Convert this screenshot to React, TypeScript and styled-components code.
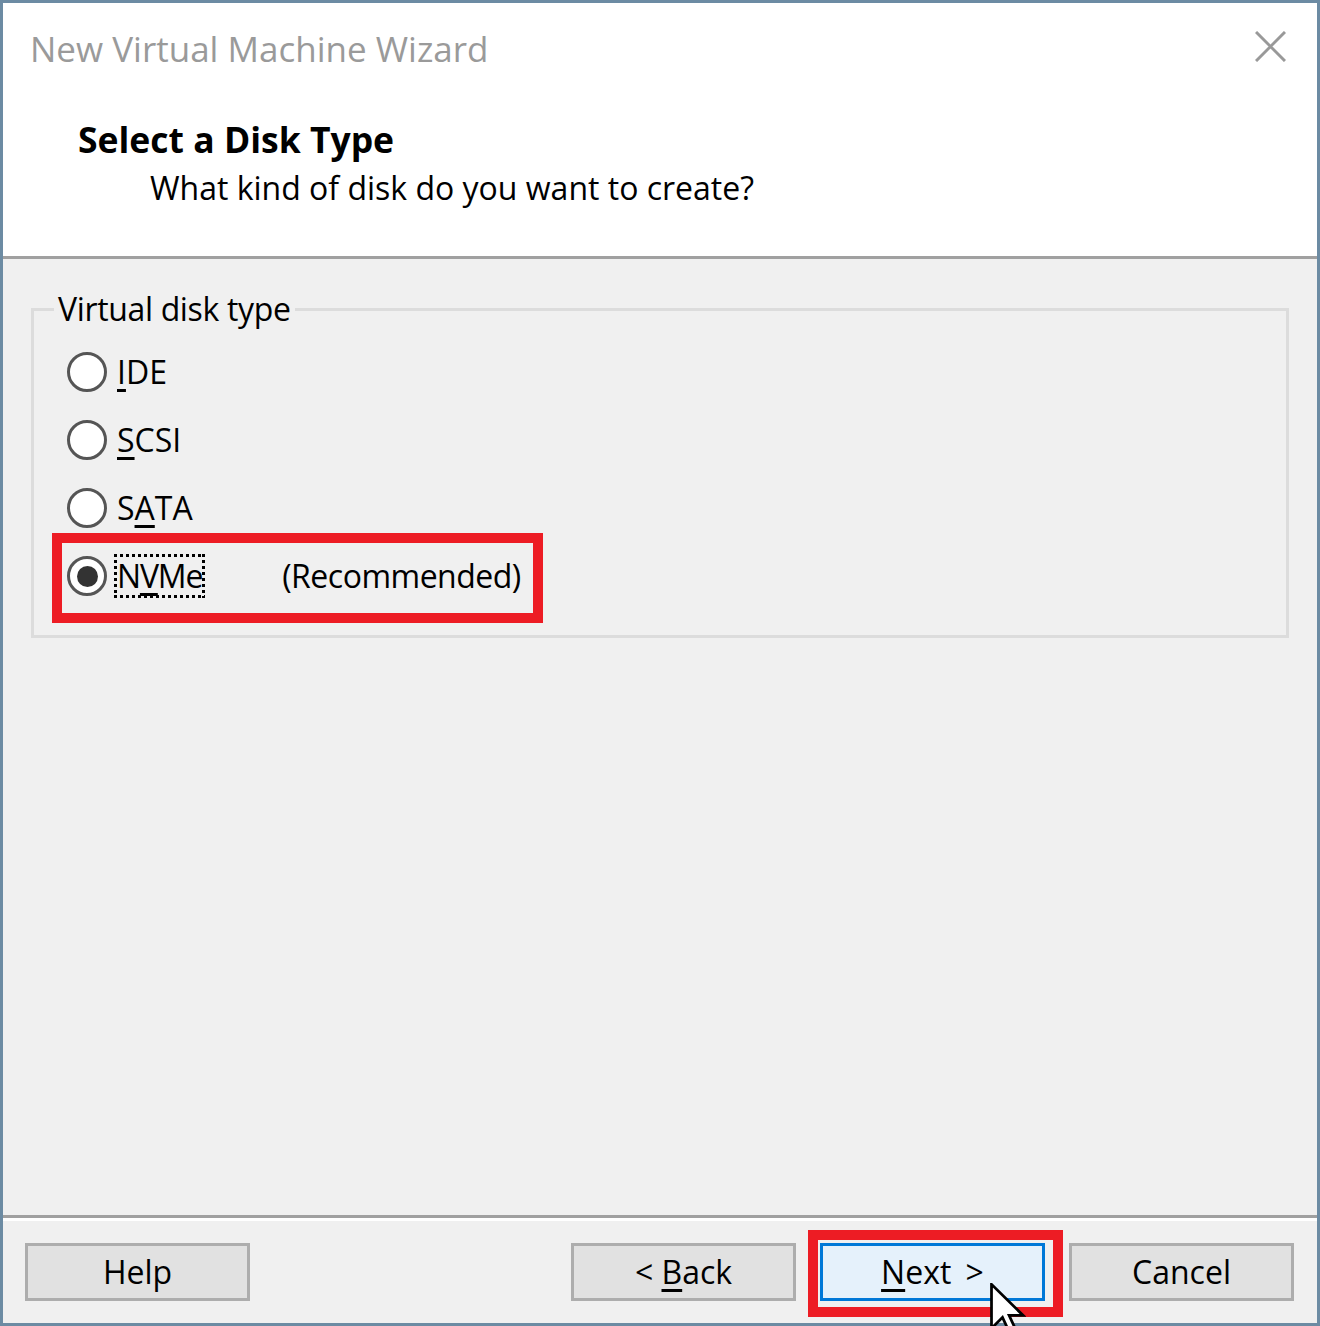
import React from "react";
import styled, { createGlobalStyle, css } from "styled-components";

const GlobalStyle = createGlobalStyle`
  html, body { margin: 0; padding: 0; overflow: hidden; background: #f0f0f0; }
  body { font-family: "Open Sans", "Noto Sans", "DejaVu Sans", sans-serif; color: #000; }
  * { box-sizing: border-box; }
`;

const Window = styled.div`
  position: relative;
  width: 1320px;
  height: 1326px;
  border: 3px solid #6c8ba3;
  background: #f0f0f0;
  display: flex;
  flex-direction: column;
`;

const Header = styled.header`
  flex: none;
  height: 256px;
  background: #fff;
  border-bottom: 3px solid #a0a0a0;
  padding: 26px 31px 0 27px;
  display: flex;
  flex-direction: column;
`;

const TitleBar = styled.div`
  display: flex;
  justify-content: space-between;
  align-items: flex-start;
  height: 40px;
`;

const Title = styled.div`
  font-size: 35px;
  line-height: 40px;
  color: #9a9a9a;
`;

const CloseIcon = styled.svg`
  margin-top: 2px;
  display: block;
`;

const Heading = styled.div`
  margin-top: 50px;
  padding-left: 48px;
  font-size: 35.5px;
  font-weight: 700;
  line-height: 40px;
`;

const Subheading = styled.div`
  margin-top: 9px;
  padding-left: 120px;
  font-size: 32px;
  line-height: 40px;
`;

const Body = styled.main`
  flex: 1;
  padding: 30px 28px 0;
`;

const Group = styled.fieldset`
  margin: 0;
  padding: 0 0 25px 0;
  border: 3px solid #dcdcdc;
  min-width: 0;
`;

const Legend = styled.legend`
  margin-left: 20px;
  padding: 0 4px;
  font-size: 32px;
  line-height: 40px;
  letter-spacing: -0.35px;
`;

const RadioList = styled.div`
  display: flex;
  flex-direction: column;
  padding: 9px 0 0 33px;
`;

const Row = styled.div`
  position: relative;
  display: flex;
  align-items: center;
  height: 68px;
`;

const Radio = styled.span<{ $checked?: boolean }>`
  flex: none;
  width: 40px;
  height: 40px;
  border-radius: 50%;
  border: 3px solid #555;
  background: #fff;
  display: grid;
  place-items: center;
  ${(p) =>
    p.$checked &&
    css`
      &::after {
        content: "";
        width: 21px;
        height: 21px;
        border-radius: 50%;
        background: #333;
      }
    `}
`;

const dots = (dir: string) =>
  `repeating-linear-gradient(${dir}, #000 0 3px, transparent 3px 6px)`;

const Label = styled.span<{ $focused?: boolean }>`
  margin-left: 7px;
  padding: 3px 3px;
  font-size: 32px;
  line-height: 38px;
  ${(p) =>
    p.$focused &&
    css`
      letter-spacing: -1.2px;
      background: ${dots("90deg")} top left / 100% 3px no-repeat,
        ${dots("90deg")} bottom left / 100% 3px no-repeat,
        ${dots("180deg")} top left / 3px 100% no-repeat,
        ${dots("180deg")} top right / 3px 100% no-repeat;
    `}
`;

const Note = styled.span`
  margin-left: 77px;
  font-size: 32px;
  line-height: 38px;
  letter-spacing: -0.5px;
`;

const Key = styled.span`
  text-decoration: underline;
  text-decoration-thickness: 3px;
  text-underline-offset: 5px;
`;

const Highlight = styled.span<{ $l: number; $t: number; $w: number; $h: number }>`
  position: absolute;
  left: ${(p) => p.$l}px;
  top: ${(p) => p.$t}px;
  width: ${(p) => p.$w}px;
  height: ${(p) => p.$h}px;
  border: 10px solid #ed1c24;
  pointer-events: none;
  z-index: 1;
`;

const Footer = styled.footer`
  flex: none;
  height: 108px;
  border-top: 3px solid #a0a0a0;
  box-shadow: inset 0 3px 0 #fff;
  padding: 25px 23px 0 22px;
  display: flex;
  align-items: flex-start;
  gap: 24px;
`;

const Spacer = styled.div`
  flex: 1;
`;

const Button = styled.button<{ $primary?: boolean }>`
  position: relative;
  width: 225px;
  height: 58px;
  padding: 0 0 0 0;
  border: 3px solid ${(p) => (p.$primary ? "#0078d7" : "#adadad")};
  background: ${(p) => (p.$primary ? "#e5f1fb" : "#e1e1e1")};
  font-family: inherit;
  font-size: 32px;
  line-height: 1;
  color: #000;
  display: flex;
  align-items: center;
  justify-content: center;
  word-spacing: ${(p) => (p.$primary ? "6px" : "0")};
`;

const Cursor = styled.svg`
  position: absolute;
  left: 167px;
  top: 37px;
  z-index: 2;
  display: block;
`;

export default function App() {
  return (
    <>
      <GlobalStyle />
      <Window>
        <Header>
          <TitleBar>
            <Title>New Virtual Machine Wizard</Title>
            <CloseIcon width="31" height="31" viewBox="0 0 31 31">
              <path d="M1 1 L30 30 M30 1 L1 30" stroke="#999" strokeWidth="3" fill="none" />
            </CloseIcon>
          </TitleBar>
          <Heading>Select a Disk Type</Heading>
          <Subheading>What kind of disk do you want to create?</Subheading>
        </Header>
        <Body>
          <Group>
            <Legend>Virtual disk type</Legend>
            <RadioList>
              <Row>
                <Radio />
                <Label>
                  <Key>I</Key>DE
                </Label>
              </Row>
              <Row>
                <Radio />
                <Label>
                  <Key>S</Key>CSI
                </Label>
              </Row>
              <Row>
                <Radio />
                <Label>
                  S<Key>A</Key>TA
                </Label>
              </Row>
              <Row>
                <Radio $checked />
                <Label $focused>
                  N<Key>V</Key>Me
                </Label>
                <Note>(Recommended)</Note>
                <Highlight $l={-15} $t={-9} $w={491} $h={90} />
              </Row>
            </RadioList>
          </Group>
        </Body>
        <Footer>
          <Button>Help</Button>
          <Spacer />
          <Button>
            &lt;&nbsp;<Key>B</Key>ack
          </Button>
          <Button $primary>
            <Key>N</Key>ext &gt;
            <Highlight $l={-15} $t={-16} $w={255} $h={87} />
            <Cursor width="36" height="55" viewBox="-0.5 -0.5 13 20">
              <path
                d="M0 0 L0 16 L4 12 L7 18.5 L9.3 17.5 L6.4 11.3 L11.5 11.3 Z"
                fill="#fff"
                stroke="#000"
                strokeWidth="1"
                strokeLinejoin="miter"
              />
            </Cursor>
          </Button>
          <Button>Cancel</Button>
        </Footer>
      </Window>
    </>
  );
}
